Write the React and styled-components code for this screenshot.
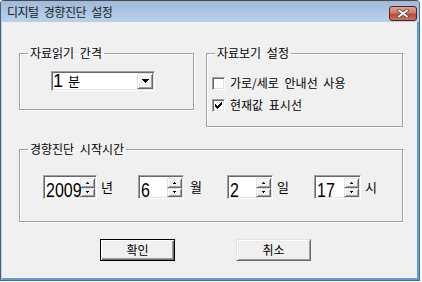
import React from "react";
import styled, { createGlobalStyle, css } from "styled-components";

const GlobalStyle = createGlobalStyle`
  html, body { margin: 0; padding: 0; background: #ffffff; }
  body { font-family: "Noto Sans CJK KR", "Noto Sans", sans-serif; color: #000; }
`;

const sunken = css`
  border: 1px solid;
  border-color: #a0a0a0 #ffffff #ffffff #a0a0a0;
  box-shadow: inset 1px 1px 0 #696969, inset -1px -1px 0 #e3e3e3;
`;

const raised = css`
  border: 1px solid;
  border-color: #e3e3e3 #696969 #696969 #e3e3e3;
  box-shadow: inset 1px 1px 0 #ffffff, inset -1px -1px 0 #a0a0a0;
`;

const Window = styled.div`
  box-sizing: border-box;
  width: 420px;
  height: 281px;
  display: flex;
  flex-direction: column;
  background: #f0f0f0;
  border: 1px solid #3b6ea5;
  border-top-color: #4a4a4a;
  border-left-color: #4a5f7a;
  border-radius: 4px 4px 0 0;
  box-shadow: inset 1px 0 0 #b9d1ec, inset -2px -2px 0 #5b9ddc;
  overflow: hidden;
`;

const TitleBar = styled.div`
  flex: none;
  height: 21px;
  display: flex;
  align-items: center;
  justify-content: space-between;
  padding: 0 2px 0 6px;
  background: linear-gradient(#9fbadb, #b8d0eb);
`;

const Title = styled.span`
  font-size: 12px;
  line-height: 14px;
  letter-spacing: -0.5px;
  word-spacing: 3px;
  color: #1b1b1b;
`;

const CloseButton = styled.div`
  box-sizing: border-box;
  width: 28px;
  height: 15px;
  margin-top: 3px;
  border: 1px solid #4b2622;
  border-radius: 3px;
  background: linear-gradient(#e3a193, #d4796a 45%, #c2462f 55%, #d0735a);
  display: flex;
  align-items: center;
  justify-content: center;
`;

const Body = styled.div`
  flex: 1;
  display: flex;
  flex-direction: column;
  padding: 24px 0 0 18px;
`;

const TopRow = styled.div`
  display: flex;
  align-items: flex-start;
  gap: 12px;
`;

const Group = styled.fieldset`
  box-sizing: border-box;
  margin: ${(p) => p.$mt || 0}px 0 0 0;
  min-width: 0;
  width: ${(p) => p.$w}px;
  height: ${(p) => p.$h}px;
  padding: 0;
  border: 1px solid #a0a0a0;
  box-shadow: inset 1px 1px 0 #ffffff, 1px 1px 0 #ffffff;
`;

const GroupContent = styled.div`
  padding: ${(p) => p.$pt}px 0 0 ${(p) => p.$pl}px;
`;

const Legend = styled.legend`
  margin-left: 8px;
  padding: 0 2px;
  font-size: 12px;
  line-height: 14px;
  word-spacing: 3px;
`;

const Combo = styled.div`
  ${sunken};
  box-sizing: border-box;
  width: 104px;
  height: 20px;
  display: flex;
  align-items: center;
  background: #ffffff;
  padding: 1px;
`;

const ComboText = styled.div`
  flex: 1;
  display: flex;
  align-items: center;
  gap: 5px;
  font-size: 13px;
  line-height: 16px;
`;

const BigNum = styled.span`
  font-family: "Liberation Sans", Arial, sans-serif;
  font-size: 18px;
  line-height: 16px;
`;

const DropButton = styled.div`
  ${raised};
  box-sizing: border-box;
  width: 16px;
  height: 16px;
  background: #f0f0f0;
  display: flex;
  align-items: center;
  justify-content: center;
`;

const CheckList = styled.div`
  display: flex;
  flex-direction: column;
  gap: 6px;
`;

const CheckRow = styled.label`
  display: flex;
  align-items: center;
  gap: 5px;
  height: 16px;
  font-size: 12px;
  line-height: 16px;
  word-spacing: 3px;
`;

const CheckBox = styled.span`
  ${sunken};
  box-sizing: border-box;
  width: 13px;
  height: 13px;
  background: #ffffff;
  display: flex;
  align-items: center;
  justify-content: center;
`;

const SpinRow = styled.div`
  display: flex;
  align-items: center;
  gap: 25px;
`;

const SpinItem = styled.div`
  display: flex;
  align-items: center;
  gap: ${(p) => p.$gap}px;
`;

const SpinBox = styled.div`
  ${sunken};
  box-sizing: border-box;
  width: ${(p) => p.$w}px;
  height: 24px;
  display: flex;
  background: #ffffff;
  padding: 2px 1px 1px 2px;
`;

const SpinValue = styled.div`
  flex: 1;
  min-width: 0;
  white-space: nowrap;
`;

const SpinDigits = styled.span`
  display: inline-block;
  font-family: "Liberation Sans", Arial, sans-serif;
  font-size: 20px;
  line-height: 19px;
  transform: scaleX(0.8);
  transform-origin: left center;
`;

const SpinButtons = styled.div`
  flex: none;
  width: 15px;
  display: flex;
  flex-direction: column;
`;

const SpinBtn = styled.div`
  ${raised};
  flex: 1;
  box-sizing: border-box;
  background: #f0f0f0;
  display: flex;
  align-items: center;
  justify-content: center;
`;

const Unit = styled.span`
  font-size: 13px;
  line-height: 16px;
`;

const ButtonRow = styled.div`
  display: flex;
  gap: 61px;
  margin-top: 17px;
  padding-left: 81px;
`;

const Button = styled.button`
  box-sizing: border-box;
  width: 75px;
  height: 22px;
  padding: 0;
  font-family: "Noto Sans CJK KR", sans-serif;
  font-size: 12px;
  line-height: 14px;
  color: #000;
  background: #f0f0f0;
  ${(p) =>
    p.$default
      ? css`
          border: 1px solid #000000;
          box-shadow: inset 1px 1px 0 #ffffff, inset -1px -1px 0 #696969,
            inset -2px -2px 0 #a0a0a0;
        `
      : raised};
`;

const UpArrow = () => (
  <svg width="3" height="2" shapeRendering="crispEdges">
    <rect x="1" y="0" width="1" height="1" fill="#000" />
    <rect x="0" y="1" width="3" height="1" fill="#000" />
  </svg>
);

const DownArrow = () => (
  <svg width="3" height="2" shapeRendering="crispEdges">
    <rect x="0" y="0" width="3" height="1" fill="#000" />
    <rect x="1" y="1" width="1" height="1" fill="#000" />
  </svg>
);

const ComboArrow = () => (
  <svg width="7" height="4" shapeRendering="crispEdges">
    <rect x="0" y="0" width="7" height="1" fill="#000" />
    <rect x="1" y="1" width="5" height="1" fill="#000" />
    <rect x="2" y="2" width="3" height="1" fill="#000" />
    <rect x="3" y="3" width="1" height="1" fill="#000" />
  </svg>
);

const CheckMark = () => (
  <svg width="7" height="7" shapeRendering="crispEdges">
    <rect x="0" y="2" width="1" height="3" fill="#000" />
    <rect x="1" y="3" width="1" height="3" fill="#000" />
    <rect x="2" y="4" width="1" height="3" fill="#000" />
    <rect x="3" y="3" width="1" height="3" fill="#000" />
    <rect x="4" y="2" width="1" height="3" fill="#000" />
    <rect x="5" y="1" width="1" height="3" fill="#000" />
    <rect x="6" y="0" width="1" height="3" fill="#000" />
  </svg>
);

const CloseIcon = () => (
  <svg width="12" height="9" viewBox="0 0 12 9">
    <path d="M2 1.5 L10 7.5 M10 1.5 L2 7.5" stroke="#4a4a4a" strokeWidth="3.4" strokeLinecap="square" />
    <path d="M2 1.5 L10 7.5 M10 1.5 L2 7.5" stroke="#ffffff" strokeWidth="1.8" strokeLinecap="square" />
  </svg>
);

function Spinner({ value, unit, width, gap = 4 }) {
  return (
    <SpinItem $gap={gap}>
      <SpinBox $w={width}>
        <SpinValue>
          <SpinDigits>{value}</SpinDigits>
        </SpinValue>
        <SpinButtons>
          <SpinBtn>
            <UpArrow />
          </SpinBtn>
          <SpinBtn>
            <DownArrow />
          </SpinBtn>
        </SpinButtons>
      </SpinBox>
      <Unit>{unit}</Unit>
    </SpinItem>
  );
}

export default function App() {
  return (
    <>
      <GlobalStyle />
      <Window>
        <TitleBar>
          <Title>디지털 경향진단 설정</Title>
          <CloseButton>
            <CloseIcon />
          </CloseButton>
        </TitleBar>
        <Body>
          <TopRow>
            <Group $w={175} $h={64}>
              <Legend>자료읽기 간격</Legend>
              <GroupContent $pt={11} $pl={31}>
                <Combo>
                  <ComboText>
                    <BigNum>1</BigNum>
                    <span>분</span>
                  </ComboText>
                  <DropButton>
                    <ComboArrow />
                  </DropButton>
                </Combo>
              </GroupContent>
            </Group>
            <Group $w={197} $h={81}>
              <Legend>자료보기 설정</Legend>
              <GroupContent $pt={15} $pl={5}>
                <CheckList>
                  <CheckRow>
                    <CheckBox />
                    가로/세로 안내선 사용
                  </CheckRow>
                  <CheckRow>
                    <CheckBox>
                      <CheckMark />
                    </CheckBox>
                    현재값 표시선
                  </CheckRow>
                </CheckList>
              </GroupContent>
            </Group>
          </TopRow>
          <Group $w={384} $h={80} $mt={15}>
            <Legend>경향진단 시작시간</Legend>
            <GroupContent $pt={19} $pl={23}>
              <SpinRow>
                <Spinner value="2009" unit="년" width={54} />
                <Spinner value="6" unit="월" width={46} gap={6} />
                <Spinner value="2" unit="일" width={46} />
                <Spinner value="17" unit="시" width={47} />
              </SpinRow>
            </GroupContent>
          </Group>
          <ButtonRow>
            <Button $default>확인</Button>
            <Button>취소</Button>
          </ButtonRow>
        </Body>
      </Window>
    </>
  );
}
